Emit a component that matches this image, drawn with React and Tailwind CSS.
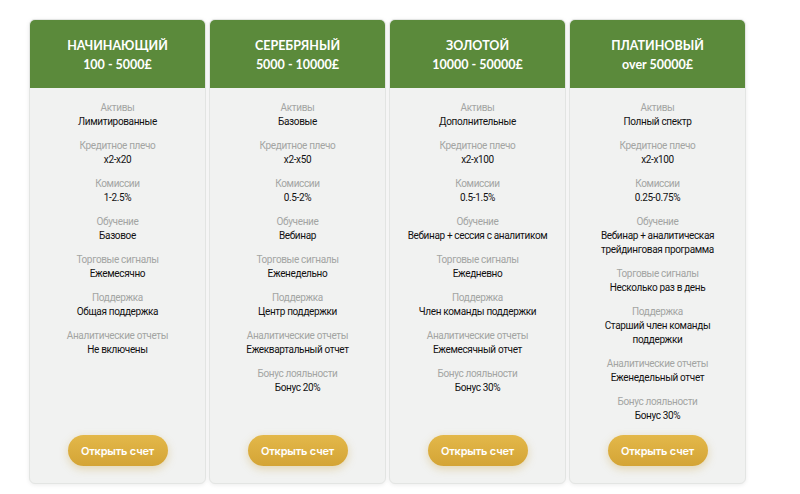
import React from "react";

const plans = [
  {
    title: "НАЧИНАЮЩИЙ",
    price: "100 - 5000£",
    rows: [
      ["Активы", "Лимитированные"],
      ["Кредитное плечо", "x2-x20"],
      ["Комиссии", "1-2.5%"],
      ["Обучение", "Базовое"],
      ["Торговые сигналы", "Ежемесячно"],
      ["Поддержка", "Общая поддержка"],
      ["Аналитические отчеты", "Не включены"],
    ],
  },
  {
    title: "СЕРЕБРЯНЫЙ",
    price: "5000 - 10000£",
    rows: [
      ["Активы", "Базовые"],
      ["Кредитное плечо", "x2-x50"],
      ["Комиссии", "0.5-2%"],
      ["Обучение", "Вебинар"],
      ["Торговые сигналы", "Еженедельно"],
      ["Поддержка", "Центр поддержки"],
      ["Аналитические отчеты", "Ежеквартальный отчет"],
      ["Бонус лояльности", "Бонус 20%"],
    ],
  },
  {
    title: "ЗОЛОТОЙ",
    price: "10000 - 50000£",
    rows: [
      ["Активы", "Дополнительные"],
      ["Кредитное плечо", "x2-x100"],
      ["Комиссии", "0.5-1.5%"],
      ["Обучение", "Вебинар + сессия с аналитиком"],
      ["Торговые сигналы", "Ежедневно"],
      ["Поддержка", "Член команды поддержки"],
      ["Аналитические отчеты", "Ежемесячный отчет"],
      ["Бонус лояльности", "Бонус 30%"],
    ],
  },
  {
    title: "ПЛАТИНОВЫЙ",
    price: "over 50000£",
    rows: [
      ["Активы", "Полный спектр"],
      ["Кредитное плечо", "x2-x100"],
      ["Комиссии", "0.25-0.75%"],
      ["Обучение", "Вебинар + аналитическая трейдинговая программа"],
      ["Торговые сигналы", "Несколько раз в день"],
      ["Поддержка", "Старший член команды поддержки"],
      ["Аналитические отчеты", "Еженедельный отчет"],
      ["Бонус лояльности", "Бонус 30%"],
    ],
  },
];

function Card({ plan }) {
  return (
    <div className="w-[177px] h-[465px] rounded-[6px] bg-[#f1f2f1] border border-[#e3e5e3] shadow-[0_1px_4px_rgba(0,0,0,0.08)] flex flex-col overflow-hidden">
      <div className="h-[68px] pt-[1px] bg-[#5b8a3b] flex flex-col items-center justify-center text-white font-bold text-[12.5px] leading-[19px] font-['Lato',sans-serif]">
        <div>{plan.title}</div>
        <div>{plan.price}</div>
      </div>
      <div className="flex-1 flex flex-col items-center pt-[13px] px-[12px] font-['Roboto',sans-serif] text-[10px] tracking-[-0.35px] leading-[14px] text-center">
        <div className="flex flex-col gap-[10px] items-center">
          {plan.rows.map(([k, v]) => (
            <div key={k} className="flex flex-col items-center">
              <div className="text-[#a3a5a3]">{k}</div>
              <div className="text-[#111111]">{v}</div>
            </div>
          ))}
        </div>
        <button className="mt-auto mb-[17px] w-[100px] h-[31px] rounded-full bg-gradient-to-b from-[#e3b84a] to-[#d4a435] text-white font-semibold text-[11px] tracking-[-0.2px] font-['Inter',sans-serif] shadow-[0_3px_8px_rgba(200,160,60,0.35)]">
          Открыть счет
        </button>
      </div>
    </div>
  );
}

export default function App() {
  return (
    <div className="w-[800px] h-[494px] bg-white pl-[29px] pt-[19px] flex gap-[3px] items-start">
      {plans.map((p) => (
        <Card key={p.title} plan={p} />
      ))}
    </div>
  );
}
